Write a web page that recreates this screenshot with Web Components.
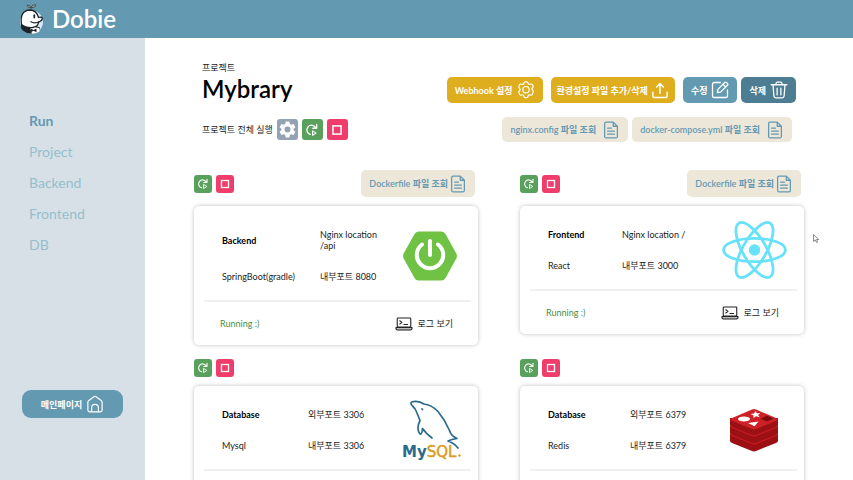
<!DOCTYPE html>
<html lang="ko">
<head>
<meta charset="utf-8">
<meta name="viewport" content="width=device-width, initial-scale=1">
<title>Dobie</title>
<style>
  html, body { height: 100%; }
  body {
    margin: 0; overflow: hidden; background: #fff; color: #222;
    font: 9px/11px Lato, "Noto Sans CJK KR", sans-serif;
  }
</style>
</head>
<body>
<dobie-app></dobie-app>

<script>
const define = (name, html, setup) => {
  const tpl = document.createElement('template');
  tpl.innerHTML = html;
  customElements.define(name, class extends HTMLElement {
    constructor() {
      super();
      this.attachShadow({ mode: 'open' }).append(tpl.content.cloneNode(true));
    }
    connectedCallback() { if (setup) setup(this, this.shadowRoot); }
  });
};

const line = (w, body, box = '0 0 24 24') =>
  `<svg viewBox="${box}" fill="none" stroke="currentColor" stroke-width="${w}" stroke-linecap="round" stroke-linejoin="round">${body}</svg>`;

const ICONS = {
  gear: line(1.6, '<path d="M9.2 3 Q9.500 1.200 11 1.200h2q1.500 0 1.800 1.800 .6 2.200 2.800 1.300 2-.8 2.800.5l1 1.700q.8 1.400-.6 2.600-1.700 1.400 0 2.900t.6 2.900l-1 3q-.8 1.400-2.800.8-2.200-.8-2.800 1.500-.3 1.900-1.800 1.900h-2q-1.500 0-1.800-1.900-.6-2.300-2.800-1.500-2 .6-2.800-.8l-1-2.400q-.7-1.400 .8-2.800 1.700-1.500 0-2.900-1.500-1.300-.8-2.700l1-2.300q.8-1.300 2.800-.5Q8.600 5.200 9.200 3z"/><circle cx="12" cy="11.500" r="4.200"/>'),
  upload: line(1.9, '<path d="M2.500 15v4.500q0 2.500 2.500 2.500h14q2.500 0 2.500-2.500V15M12 16.500V4M7.500 8L12 3.500 16.500 8"/>'),
  edit: line(1.7, '<path d="M12.500 2H4.500Q2 2 2 4.500v15Q2 22 4.500 22h15q2.500 0 2.500-2.500V12"/><path d="M8.500 15.500l.7-4.300L18.300 2.100q1.200-1.100 2.400 0l1.200 1.200q1.100 1.200 0 2.400L12.800 14.800zM16 4.500l3.500 3.500"/>'),
  trash: line(1.7, '<path d="M1.500 5h21M8 5V3.500Q8 1.500 10 1.500h4q2 0 2 2V5M4 5l1.200 15q.2 2.500 2.500 2.500h8.600q2.300 0 2.500-2.500L20 5M9.500 9.500v9M14.500 9.500v9"/>'),
  file: line(1.7, '<path d="M15 1.500H5.500Q3.500 1.500 3.500 3.500v17q0 2 2 2h13q2 0 2-2V7zM15 1.500V7h5.500M7.500 9.500h5M7.500 13.500h9M7.500 17.500h9"/>'),
  home: line(1.6, '<path d="M2.500 9.500Q2.500 8 3.800 7.200L11 2q1-.7 2 0l7.200 5.200q1.300.8 1.300 2.300V20q0 2.500-2.500 2.500H5Q2.500 22.500 2.500 20zM7.500 22v-5a4.500 4.500 0 0 1 9 0v5"/>'),
  cog: '<svg viewBox="0 0 24 24"><path fill="currentColor" fill-rule="evenodd" d="M9.700 2h4.600l.6 3 1.900 1.100 2.900-1 2.300 4-2.300 2v1.800l2.300 2-2.300 4-2.900-1-1.900 1.100-.6 3H9.700l-.6-3-1.900-1.100-2.900 1-2.300-4 2.300-2v-1.800l-2.300-2 2.300-4 2.900 1L9.100 5zM12 8.200a3.800 3.800 0 1 0 0 7.600 3.800 3.800 0 0 0 0-7.600z"/></svg>',
  rerun: line(2.2, '<path d="M9 19.500A8 8 0 1 1 18.500 8.500M20 2.500v6.500h-6.500"/><path d="M13 13.500v7.500l6-3.700z" stroke-width="1.800"/>'),
  stop: line(2.6, '<rect x="5" y="5" width="14" height="14" stroke-linejoin="miter"/>'),
  log: '<svg viewBox="0 0 36 28" fill="none" stroke="#222" stroke-width="2.200" stroke-linejoin="round"><rect x="4.500" y="2" width="27" height="18" rx="1.500"/><path d="M2 21h32v2.500q0 2.500-3 2.500H5q-3 0-3-2.500z" fill="#bbb"/><path d="M9 7l5 3.700L9 14.500M17 15h9"/></svg>',
  spring: '<svg viewBox="0 0 54 50"><path fill="#70c244" d="M15.500 0.500h23q2.500 0 4 2.500l10.800 19.500q1.200 2.500 0 5L42.500 47q-1.500 2.500-4 2.500h-23q-2.500 0-4-2.500L.7 27.500q-1.200-2.500 0-5L11.500 3q1.500-2.500 4-2.500z"/><g fill="none" stroke="#fff" stroke-width="4" stroke-linecap="round"><path d="M27 10v14"/><path d="M19 13.500a13.200 13.200 0 1 0 16 0"/></g></svg>',
  react: '<svg viewBox="-32.500 -29 65 58" fill="none" stroke="#67e2f8" stroke-width="2.800"><ellipse rx="31" ry="11.700"/><ellipse rx="31" ry="11.700" transform="rotate(60)"/><ellipse rx="31" ry="11.700" transform="rotate(120)"/><circle r="5.700" fill="#67e2f8" stroke="none"/></svg>',
  mysql: '<svg viewBox="0 0 60 60"><g fill="none" stroke="#2b6a8c" stroke-width="1.700" stroke-linecap="round" stroke-linejoin="round"><path d="M56 48q-4-5-10-7l4-1.500 5-1q-6-2.500-7.500-8Q43 20 36 11.500 29 4.500 22 4 16 0 9.500 2q-1.500 1.500 1 4 3 2.500 4.500 7l3 7.500q-3 6-1.500 10.500 1 3.500 2.500 3 1.500-1.500 1.500-5.500 3 4.500 9.500 9.500"/><path d="M19.500 9q1-.6 1.200.8" stroke-width="1.300"/></g><text y="57" font-family="DejaVu Sans, sans-serif" font-weight="700" font-size="15"><tspan x="0" fill="#2b6a8c">My</tspan><tspan fill="#dc9a24" font-weight="400" stroke="#dc9a24" stroke-width=".5">SQL</tspan></text><circle cx="57.500" cy="55.500" r="1.200" fill="#dc9a24"/></svg>',
  redis: '<svg viewBox="0 0 50 44"><path fill="#9c1014" d="M1 26v7q0 1 2 2l20 8q2 .8 4 0l20-8q2-1 2-2v-7z"/><path fill="#cf1f27" d="M2 25.500L23 17q2-.8 4 0l21 8.500q1.500 1 0 2L27 36q-2 .8-4 0L2 27.500q-1.500-1 0-2z"/><path fill="#9c1014" d="M1 18v7q0 1 2 2l20 8q2 .8 4 0l20-8q2-1 2-2v-7z"/><path fill="#cf1f27" d="M2 17.500L23 9q2-.8 4 0l21 8.500q1.500 1 0 2L27 28q-2 .8-4 0L2 19.500q-1.500-1 0-2z"/><path fill="#9c1014" d="M1 10v7q0 1 2 2l20 8q2 .8 4 0l20-8q2-1 2-2v-7z"/><path fill="#cf1f27" d="M2 10.500L23 1.500q2-.8 4 0l21 9q1.500 1 0 2L27 21q-2 .8-4 0L2 12.500q-1.500-1 0-2z"/><ellipse cx="15" cy="11" rx="6" ry="2.600" fill="#fff"/><path fill="#fff" d="M26.500 3l1.200 2.200 3.600-.2-2.200 2 1.700 2.200-3.700-.9-2.800 1.700.3-2.500-3-1.500 3.500-.5zM19 15l10.500-1.500-4 4.700z"/><path fill="#7a0c0f" d="M31.500 10.800l6.500-3 6.500 3-6.500 2.800z"/></svg>',
  mascot: '<svg viewBox="0 0 26 30"><circle cx="13.500" cy="18" r="11.500" fill="#d5eaf5"/><path d="M3 20q-1 4.500 2.500 7 3.500 2.800 8 2.500l7-1.800 1.500-4.200-5-2-8-.5z" fill="#1d2327"/><path d="M12 24.500l4-1.500 5 1 .5 3.500q-3 2.200-7.500 2z" fill="#fff"/><path d="M3.500 20.500Q1.500 6.500 12 6q6.500.2 8.500 7.500 3.500-1 3.800 1 .2 2.200-3.800 3.500 0 4.500-6 5.500Q7.500 24 3.500 20.500z" fill="#fff" stroke="#1d2327" stroke-width="1.300"/><path d="M12.500 17.500q3.500 2.500 9 .3" fill="none" stroke="#1d2327" stroke-width="1.100"/><path d="M16.300 11.200v2.200" stroke="#1d2327" stroke-width="1.700" stroke-linecap="round"/><path d="M12.500 24.500l3 1.500 3-1.500v3.700l-3-1.400-3 1.400z" fill="#1d2327"/><path d="M13 6V3.500Q9.500 4 9 1.200q3.200-.7 4 2.300 1.200-3.200 4.500-2.700.3 3-4.500 2.700" fill="#a9b6a8" stroke="#3c474b" stroke-width=".9"/></svg>',
  pointer: '<svg viewBox="0 0 12 18"><path d="M1 1v14l3.500-3.200L7 17l2.300-1-2.300-5h4.500z" fill="#fff" stroke="#444" stroke-width="1.200"/></svg>'
};

define('ui-icon', `
  <style>
    :host { display: inline-flex; flex: none; }
    svg { display: block; width: var(--w, 18px); height: var(--h, 18px); }
  </style>`, (el, root) => {
    root.querySelector('svg')?.remove();
    root.append(document.createRange().createContextualFragment(ICONS[el.getAttribute('name')]));
  });

define('label-button', `
  <style>
    :host { display: inline-flex; }
    button {
      display: flex; align-items: center; justify-content: center; gap: 4px; width: 100%;
      height: var(--height, 26px); padding: 0 8px; border: 0; border-radius: 5px;
      background: var(--bg, #dfae1f); color: var(--ink, #fff);
      font: inherit; font-weight: 700; white-space: nowrap; cursor: pointer;
    }
    :host([compact]) button { gap: 3px; padding: 0 6px; }
    :host([tone=blue]) { --bg: #6499b2; }
    :host([tone=deep]) { --bg: #4d7d92; }
    :host([tone=file]) { --bg: #ede7d9; --ink: #6499b2; --height: 25px; }
    :host([tone=file]) button { gap: 1px; font-weight: 600; }
    :host([tone=file][roomy]) button { gap: 6px; }
    :host([tone=home]) { --bg: #6499b2; --height: 28px; }
    :host([tone=home]) button { border-radius: 9px; }
  </style>
  <button type="button"><slot></slot></button>`, (el, root) => {
    root.querySelector('ui-icon')?.remove();
    root.querySelector('button').insertAdjacentHTML('beforeend',
      `<ui-icon name="${el.getAttribute('icon')}"></ui-icon>`);
  });

define('icon-button', `
  <style>
    :host { display: inline-flex; --size: 18px; --w: 12px; --h: 12px; }
    :host([large]) { --size: 21px; --w: 14px; --h: 14px; }
    :host([large][tone=gray]) { --w: 19px; --h: 19px; }
    button {
      display: grid; place-items: center; width: var(--size); height: var(--size);
      padding: 0; border: 0; border-radius: 3px; background: var(--bg); color: #fff; cursor: pointer;
    }
    :host([tone=gray]) { --bg: #94a3b3; }
    :host([tone=green]) { --bg: #5aa05d; }
    :host([tone=pink]) { --bg: #ef3e6b; }
  </style>
  <button type="button"></button>`, (el, root) => {
    const b = root.querySelector('button');
    b.setAttribute('aria-label', el.getAttribute('label'));
    b.innerHTML = `<ui-icon name="${el.getAttribute('icon')}"></ui-icon>`;
  });

define('app-header', `
  <style>
    :host { display: block; background: #6499b2; color: #fff; }
    a {
      display: inline-flex; align-items: center; gap: 8px; height: 38px; padding-left: 18px;
      color: inherit; text-decoration: none; font-size: 24px; line-height: 38px; font-weight: 600;
    }
    ui-icon { --w: 26px; --h: 30px; }
  </style>
  <a href="#"><ui-icon name="mascot"></ui-icon><slot></slot></a>`);

define('side-link', `
  <style>
    :host { display: block; }
    a { color: #93bfcd; text-decoration: none; font-size: 14px; line-height: 31px; }
    :host([current]) a { color: #6499b2; font-weight: 700; }
  </style>
  <a href="#"><slot></slot></a>`);

define('app-sidebar', `
  <style>
    :host {
      display: flex; flex-direction: column; flex: 0 0 17%; box-sizing: border-box;
      padding: 67px 22px 62px; background: #d8e0e7;
    }
    nav { padding-left: 7px; margin-bottom: auto; }
  </style>
  <nav><slot></slot></nav>
  <slot name="bottom"></slot>`);

define('project-head', `
  <style>
    :host { display: block; padding: 24px 8px 0; }
    .row { display: flex; align-items: center; justify-content: space-between; }
    .first { align-items: end; padding-top: 1px; }
    h1 { margin: 0; color: #000; font-size: 24px; line-height: 29px; font-weight: 600; }
    .tools, .run { display: flex; gap: 4px; align-items: center; }
    .tools .wide { margin-right: 4px; }
    .second { padding: 14px 4px 0 0; }
  </style>
  <div>프로젝트</div>
  <div class="row first">
    <h1><slot></slot></h1>
    <div class="tools">
      <label-button class="wide" icon="gear">Webhook 설정</label-button>
      <label-button class="wide" compact icon="upload">환경설정 파일 추가/삭제</label-button>
      <label-button tone="blue" icon="edit">수정</label-button>
      <label-button tone="deep" icon="trash">삭제</label-button>
    </div>
  </div>
  <div class="row second">
    <div class="run">
      <span>프로젝트 전체 실행</span>
      <icon-button large tone="gray" icon="cog" label="설정"></icon-button>
      <icon-button large tone="green" icon="rerun" label="실행"></icon-button>
      <icon-button large tone="pink" icon="stop" label="중지"></icon-button>
    </div>
    <div class="tools">
      <label-button tone="file" roomy icon="file">nginx.config 파일 조회</label-button>
      <label-button tone="file" roomy icon="file">docker-compose.yml 파일 조회</label-button>
    </div>
  </div>`);

define('service-card', `
  <style>
    :host { display: block; }
    .bar { display: flex; align-items: center; gap: 4px; margin-bottom: 9px; }
    .bar ::slotted(label-button) { margin-left: auto; margin-right: 3px; --height: 27px; }
    article {
      box-sizing: border-box; padding: 13px 7px 0 10px; border-radius: 5px;
      background: #fff; box-shadow: 0 0 4px rgba(0, 0, 0, .25);
    }
    .info { display: flex; align-items: center; padding: 0 1px 8px 18px; }
    .facts {
      flex: 1; display: grid; grid-template-columns: var(--first, 86px) 1fr;
      align-items: center;
    }
    .facts > * { margin: 0; padding: 10px 0; font: inherit; }
    .facts > h2 { color: #000; font-weight: 700; }
    .art { flex: 0 0 var(--art, 84px); display: flex; align-items: center; justify-content: center; height: 0; }
    footer {
      display: flex; align-items: center; justify-content: space-between;
      padding: 0 18px 0 16px; height: 43px; border-top: 2px solid #f0f0f0;
    }
    .state { color: #3f8f4a; }
    button {
      display: flex; align-items: center; gap: 5px; padding: 0; border: 0;
      background: none; color: inherit; font: inherit; cursor: pointer; --w: 18px; --h: 14px;
    }
  </style>
  <div class="bar">
    <icon-button tone="green" icon="rerun" label="실행"></icon-button>
    <icon-button tone="pink" icon="stop" label="중지"></icon-button>
    <slot name="file"></slot>
  </div>
  <article>
    <div class="info">
      <div class="facts">
        <h2><slot name="kind"></slot></h2><p><slot name="route"></slot></p>
        <p><slot name="stack"></slot></p><p><slot name="port"></slot></p>
      </div>
      <div class="art"><slot name="art"></slot></div>
    </div>
    <footer>
      <span class="state">Running :)</span>
      <button type="button"><ui-icon name="log"></ui-icon>로그 보기</button>
    </footer>
  </article>`);

define('dobie-app', `
  <style>
    :host { display: flex; flex-direction: column; height: 100vh; }
    .body { display: flex; flex: 1; min-height: 0; }
    main { flex: 1; min-width: 0; overflow: auto; scrollbar-width: none; padding: 0 49px 40px; }
    .services {
      display: grid; grid-template-columns: 1fr 1fr; gap: 14px 42px;
      align-items: start; padding-top: 28px;
    }
    .spring { --w: 54px; --h: 50px; }
    .react { --w: 65px; --h: 58px; }
    .mysql { --w: 60px; --h: 60px; }
    .redis { --w: 50px; --h: 44px; }
    .pointer { position: absolute; left: 813px; top: 234px; --w: 6px; --h: 9px; pointer-events: none; }
  </style>
  <app-header>Dobie</app-header>
  <div class="body">
    <app-sidebar>
      <side-link current>Run</side-link>
      <side-link>Project</side-link>
      <side-link>Backend</side-link>
      <side-link>Frontend</side-link>
      <side-link>DB</side-link>
      <label-button slot="bottom" tone="home" icon="home">메인페이지</label-button>
    </app-sidebar>
    <main>
      <project-head>Mybrary</project-head>
      <div class="services">
        <service-card style="--first: 98px; --art: 80px">
          <label-button slot="file" tone="file" icon="file">Dockerfile 파일 조회</label-button>
          <span slot="kind">Backend</span><span slot="route">Nginx location<br>/api</span>
          <span slot="stack">SpringBoot(gradle)</span><span slot="port">내부포트 8080</span>
          <ui-icon slot="art" class="spring" name="spring"></ui-icon>
        </service-card>
        <service-card style="--first: 74px">
          <label-button slot="file" tone="file" icon="file">Dockerfile 파일 조회</label-button>
          <span slot="kind">Frontend</span><span slot="route">Nginx location /</span>
          <span slot="stack">React</span><span slot="port">내부포트 3000</span>
          <ui-icon slot="art" class="react" name="react"></ui-icon>
        </service-card>
        <service-card style="--art: 76px">
          <span slot="kind">Database</span><span slot="route">외부포트 3306</span>
          <span slot="stack">Mysql</span><span slot="port">내부포트 3306</span>
          <ui-icon slot="art" class="mysql" name="mysql"></ui-icon>
        </service-card>
        <service-card style="--first: 82px">
          <span slot="kind">Database</span><span slot="route">외부포트 6379</span>
          <span slot="stack">Redis</span><span slot="port">내부포트 6379</span>
          <ui-icon slot="art" class="redis" name="redis"></ui-icon>
        </service-card>
      </div>
    </main>
  </div>
  <ui-icon class="pointer" name="pointer"></ui-icon>`);
</script>
</body>
</html>
